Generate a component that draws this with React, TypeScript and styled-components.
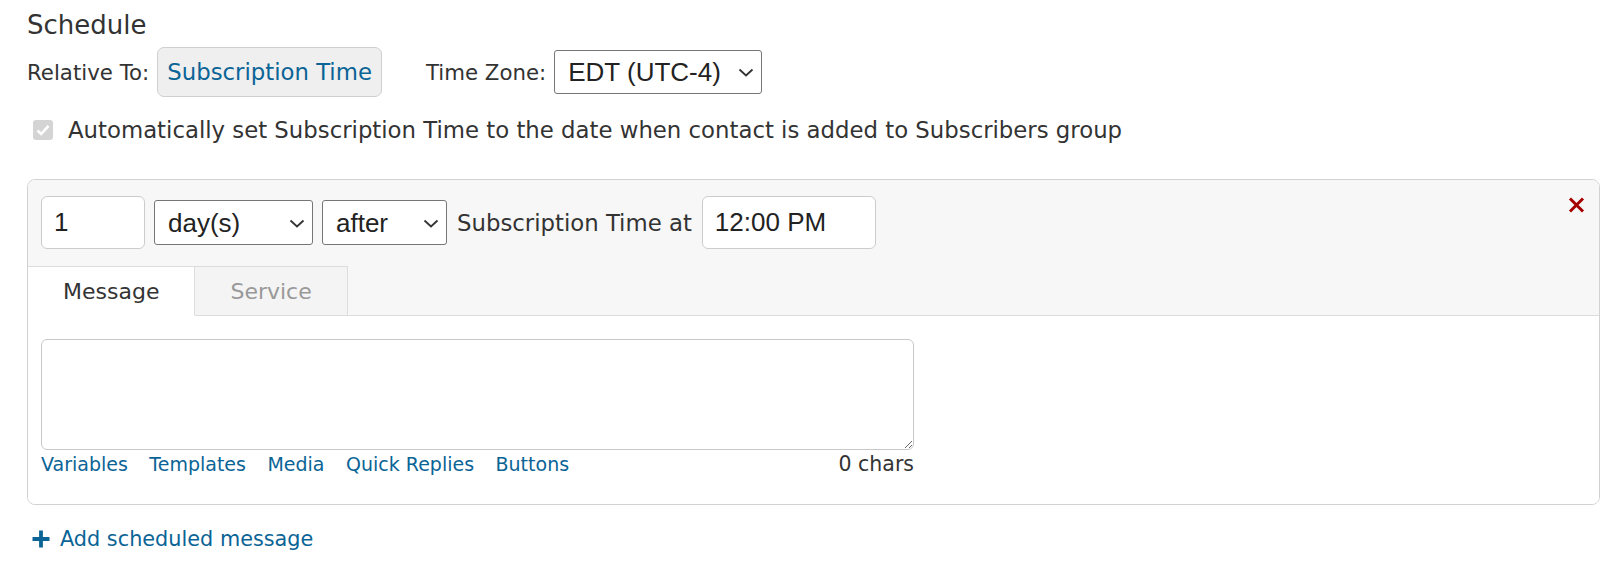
import styled, { createGlobalStyle } from "styled-components"

const GlobalStyle = createGlobalStyle`
  body {
    margin: 0;
    background: #fff;
    font-family: "DejaVu Sans", Verdana, sans-serif;
    color: #333;
  }
  * { box-sizing: border-box; }
`

const BLUE = "#0a6496"

const Chevron = () => (
  <ChevronIcon width="16" height="9" viewBox="0 0 16 9">
    <path d="M1.5 1.5 L8 7.5 L14.5 1.5" fill="none" stroke="#333" strokeWidth="1.8" />
  </ChevronIcon>
)

interface DropdownProps {
  width: number
  height: number
  value: string
}

const Dropdown = ({ width, height, value }: DropdownProps) => (
  <SelectWrap>
    <Select $w={width} $h={height} defaultValue={value}>
      <option>{value}</option>
    </Select>
    <Chevron />
  </SelectWrap>
)

const App = () => {
  const links = ["Variables", "Templates", "Media", "Quick Replies", "Buttons"]
  return (
    <Page>
      <GlobalStyle />
      <Heading>Schedule</Heading>

      <TopRow>
        <Field>
          <Label>Relative To:</Label>
          <PillButton>Subscription Time</PillButton>
        </Field>
        <Field>
          <Label>Time Zone:</Label>
          <Dropdown width={208} height={44} value="EDT (UTC-4)" />
        </Field>
      </TopRow>

      <CheckRow>
        <CheckBox>
          <svg width="14" height="12" viewBox="0 0 14 12">
            <path d="M1.5 6.5 L5.2 10 L12.5 1.8" fill="none" stroke="#fff" strokeWidth="2.6" />
          </svg>
        </CheckBox>
        <span>Automatically set Subscription Time to the date when contact is added to Subscribers group</span>
      </CheckRow>

      <Panel>
        <PanelHeader>
          <ControlRow>
            <TextInput $w={104} defaultValue="1" />
            <Dropdown width={159} height={45} value="day(s)" />
            <Dropdown width={125} height={45} value="after" />
            <InlineLabel>Subscription Time at</InlineLabel>
            <TextInput $w={174} defaultValue="12:00 PM" />
            <CloseButton aria-label="Remove">
              <svg width="17" height="16" viewBox="0 0 17 16">
                <path d="M2 1.5 L15 14.5 M15 1.5 L2 14.5" stroke="#a50000" strokeWidth="3" />
              </svg>
            </CloseButton>
          </ControlRow>
          <Tabs>
            <Tab $active>Message</Tab>
            <Tab>Service</Tab>
          </Tabs>
        </PanelHeader>

        <PanelBody>
          <Editor>
            <MessageBox />
            <FooterRow>
              {links.map((l) => (
                <ToolLink key={l} href="#">{l}</ToolLink>
              ))}
              <CharCount>0 chars</CharCount>
            </FooterRow>
          </Editor>
        </PanelBody>
      </Panel>

      <AddLink href="#">
        <svg width="18" height="18" viewBox="0 0 18 18">
          <path d="M9 0.5 V17.5 M0.5 9 H17.5" stroke={BLUE} strokeWidth="3.8" />
        </svg>
        Add scheduled message
      </AddLink>
    </Page>
  )
}

const Page = styled.div`
  padding: 9px 11px 20px 27px;
`

const Heading = styled.h2`
  margin: 0;
  font-size: 26px;
  line-height: 32px;
  font-weight: normal;
  color: #333;
`

const TopRow = styled.div`
  display: flex;
  align-items: center;
  gap: 44px;
  margin-top: 6px;
  height: 50px;
`

const Field = styled.div`
  display: flex;
  align-items: center;
  gap: 8px;
`

const Label = styled.span`
  font-size: 21.3px;
  color: #333;
`

const PillButton = styled.button`
  height: 50px;
  padding: 0 9px;
  border: 1px solid #cfcfcf;
  border-radius: 7px;
  background: #efefef;
  color: ${BLUE};
  font-family: inherit;
  font-size: 22.8px;
`

const SelectWrap = styled.div`
  position: relative;
  display: inline-flex;
`

const Select = styled.select<{ $w: number; $h: number }>`
  appearance: none;
  width: ${(p) => p.$w}px;
  height: ${(p) => p.$h}px;
  padding: 0 0 0 13px;
  border: 1px solid #767676;
  border-radius: 3px;
  background: #fff;
  color: #222;
  font-family: "Liberation Sans", Arial, sans-serif;
  font-size: 26px;
`

const ChevronIcon = styled.svg`
  position: absolute;
  right: 8px;
  top: 50%;
  margin-top: -4px;
  pointer-events: none;
`

const CheckRow = styled.label`
  display: flex;
  align-items: center;
  gap: 15px;
  margin: 20px 0 0 6px;
  height: 26px;
  font-size: 22.8px;
  color: #333;
`

const CheckBox = styled.span`
  width: 20px;
  height: 20px;
  border-radius: 3px;
  background: #d4d4d4;
  display: flex;
  align-items: center;
  justify-content: center;
`

const Panel = styled.div`
  margin-top: 36px;
  border: 1px solid #d2d2d2;
  border-radius: 8px;
  overflow: hidden;
`

const PanelHeader = styled.div`
  background: #f7f7f7;
`

const ControlRow = styled.div`
  display: flex;
  align-items: center;
  gap: 9px;
  padding: 16px 14px 0 13px;
`

const TextInput = styled.input<{ $w: number }>`
  width: ${(p) => p.$w}px;
  height: 53px;
  padding: 0 12px;
  border: 1px solid #cccccc;
  border-radius: 6px;
  background: #fff;
  color: #222;
  font-family: "Liberation Sans", Arial, sans-serif;
  font-size: 26px;
`

const InlineLabel = styled.span`
  font-size: 22.8px;
  color: #333;
  margin: 0 1px;
`

const CloseButton = styled.button`
  margin-left: auto;
  align-self: flex-start;
  margin-top: 1px;
  padding: 0;
  border: none;
  background: none;
  display: flex;
`

const Tabs = styled.div`
  display: flex;
  margin-top: 17px;
  border-bottom: 1px solid #dddddd;
  height: 50px;
`

const Tab = styled.button<{ $active?: boolean }>`
  height: 50px;
  padding: 0 35px;
  border: none;
  border-top: 1px solid #dddddd;
  border-right: 1px solid #dddddd;
  border-bottom: 1px solid ${(p) => (p.$active ? "#fff" : "#dddddd")};
  background: ${(p) => (p.$active ? "#fff" : "#f4f4f4")};
  color: ${(p) => (p.$active ? "#333" : "#999")};
  font-family: inherit;
  font-size: 22px;
`

const PanelBody = styled.div`
  background: #fff;
  padding: 23px 13px 28px;
`

const Editor = styled.div`
  width: 873px;
`

const MessageBox = styled.textarea`
  display: block;
  width: 100%;
  height: 111px;
  border: 1px solid #c8c8c8;
  border-radius: 6px;
  background: #fff;
`

const FooterRow = styled.div`
  display: flex;
  align-items: baseline;
  gap: 21.5px;
  margin-top: 2px;
`

const ToolLink = styled.a`
  color: ${BLUE};
  font-size: 19px;
  text-decoration: none;
`

const CharCount = styled.span`
  margin-left: auto;
  font-size: 20.5px;
  color: #333;
`

const AddLink = styled.a`
  display: flex;
  align-items: center;
  gap: 10px;
  margin: 22px 0 0 5px;
  color: ${BLUE};
  font-size: 20.8px;
  text-decoration: none;
`

export default App
